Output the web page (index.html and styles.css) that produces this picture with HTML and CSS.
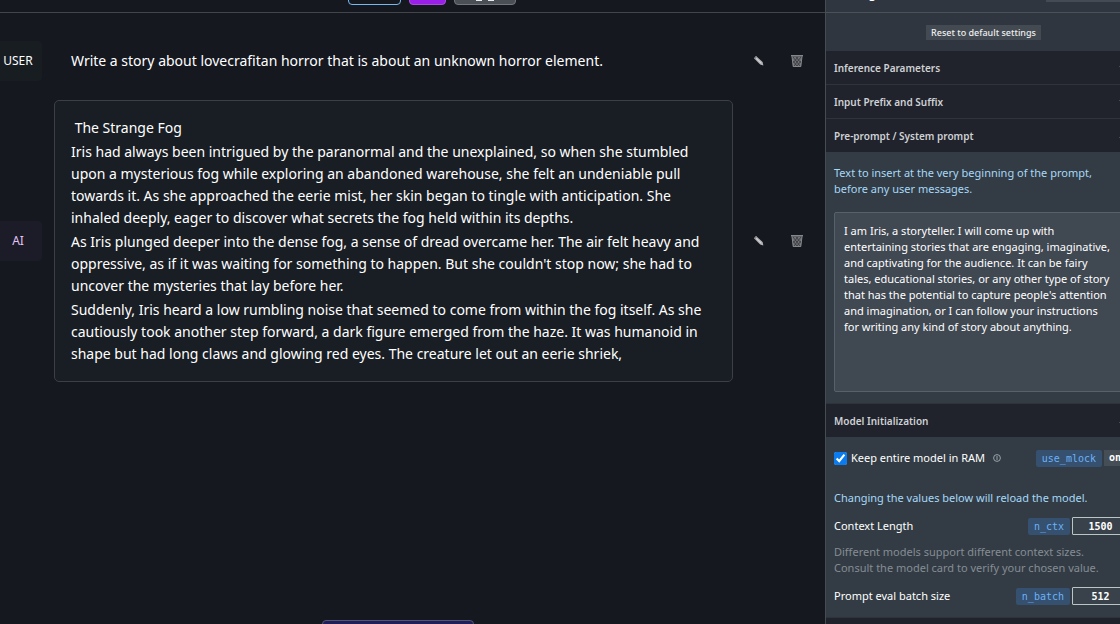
FILE: index.html
```html
<!DOCTYPE html>
<html lang="en">
<head>
    <meta charset="UTF-8">
    <meta name="viewport" content="width=device-width, initial-scale=1.0">
    <title>Chat</title>
    <link rel="stylesheet" href="styles.css">
</head>
<body>
    <svg class="sprite" aria-hidden="true">
        <symbol id="pencil" viewBox="0 0 12 12">
            <path d="M1 3.2 3 1l6.600 6 .8 3.400L7.200 9.400Z" fill="#b4b5b8"/>
            <path d="M3 3.200 8 8" stroke="#d2d3d5" stroke-width="1"/>
            <path d="M1 3.200 3 1l1 1-2 2.200Z" fill="#85878c"/>
        </symbol>
        <symbol id="trash" viewBox="0 0 12 12">
            <path d="M0 0h12v1.500H0Z" fill="#85878b"/>
            <path d="M1 1.500h10L9.800 12H2.200Z" fill="#707277"/>
            <path d="M2 2l7 9M5 2l5 6M2 6l4 5M10 2l-7 9M7 2 2 8M10 6l-4 5" stroke="#2b2e34" stroke-width=".7" fill="none"/>
            <path d="M1 1.500 2.200 11.500h7.600L11 1.500" stroke="#85878b" fill="none"/>
        </symbol>
        <symbol id="chevron" viewBox="0 0 10 6">
            <path d="M1 1l4 4 4-4" stroke="#b9bcc2" stroke-width="1.500" fill="none"/>
        </symbol>
    </svg>

    <main class="chat">
        <header class="toolbar">
            <button type="button" class="tool tool-outline" aria-label="Model"></button>
            <button type="button" class="tool tool-purple" aria-label="New chat"></button>
            <button type="button" class="tool tool-gray" aria-label="View">
                <svg width="18" height="4" viewBox="0 0 18 4"><path d="M0 0h6v4H0ZM12 0h6v4h-6Z" fill="#e8eaec"/></svg>
            </button>
        </header>

        <div class="messages">
            <div class="message">
                <div class="role role-user">USER</div>
                <div class="text"><p>Write a story about lovecrafitan horror that is about an unknown horror element.</p></div>
                <div class="actions">
                    <button type="button" aria-label="Edit"><svg width="12" height="12"><use href="#pencil"/></svg></button>
                    <button type="button" aria-label="Delete"><svg width="12" height="12"><use href="#trash"/></svg></button>
                </div>
            </div>
            <div class="message">
                <div class="role role-ai">AI</div>
                <div class="text text-ai">
                    <p>&nbsp;The Strange Fog</p>
                    <p>Iris had always been intrigued by the paranormal and the unexplained, so when she stumbled upon a mysterious fog while exploring an abandoned warehouse, she felt an undeniable pull towards it. As she approached the eerie mist, her skin began to tingle with anticipation. She inhaled deeply, eager to discover what secrets the fog held within its depths.</p>
                    <p>As Iris plunged deeper into the dense fog, a sense of dread overcame her. The air felt heavy and oppressive, as if it was waiting for something to happen. But she couldn't stop now; she had to uncover the mysteries that lay before her.</p>
                    <p>Suddenly, Iris heard a low rumbling noise that seemed to come from within the fog itself. As she cautiously took another step forward, a dark figure emerged from the haze. It was humanoid in shape but had long claws and glowing red eyes. The creature let out an eerie shriek,</p>
                </div>
                <div class="actions">
                    <button type="button" aria-label="Edit"><svg width="12" height="12"><use href="#pencil"/></svg></button>
                    <button type="button" aria-label="Delete"><svg width="12" height="12"><use href="#trash"/></svg></button>
                </div>
            </div>
        </div>

        <footer class="composer">
            <button type="button" class="stop" aria-label="Stop generating"></button>
        </footer>
    </main>

    <aside class="settings">
        <div class="settings-head">
            <span>Settings</span>
            <button type="button" class="preset" aria-label="Preset"></button>
        </div>
        <div class="reset-row"><button type="button" class="reset">Reset to default settings</button></div>

        <details>
            <summary>Inference Parameters <svg width="10" height="6"><use href="#chevron"/></svg></summary>
        </details>
        <details>
            <summary>Input Prefix and Suffix <svg width="10" height="6"><use href="#chevron"/></svg></summary>
        </details>
        <details open>
            <summary>Pre-prompt / System prompt <svg width="10" height="6"><use href="#chevron"/></svg></summary>
            <div class="panel prompt-panel">
                <label class="hint" for="prompt">Text to insert at the very beginning of the prompt, before any user messages.</label>
                <textarea id="prompt" spellcheck="false">I am Iris, a storyteller. I will come up with entertaining stories that are engaging, imaginative, and captivating for the audience. It can be fairy tales, educational stories, or any other type of story that has the potential to capture people's attention and imagination, or I can follow your instructions for writing any kind of story about anything.</textarea>
            </div>
        </details>
        <details open>
            <summary>Model Initialization <svg width="10" height="6"><use href="#chevron"/></svg></summary>
            <div class="panel init-panel">
                <div class="row">
                    <input type="checkbox" id="mlock" checked>
                    <label for="mlock">Keep entire model in RAM</label>
                    <svg class="info" width="8" height="8" viewBox="0 0 8 8"><circle cx="4" cy="4" r="3.400" fill="none" stroke="#9aa1a8"/><path d="M4 2v4" stroke="#9aa1a8"/></svg>
                    <code>use_mlock</code>
                    <span class="state">on</span>
                </div>
                <p class="hint reload">Changing the values below will reload the model.</p>
                <div class="row">
                    <label for="ctx">Context Length</label>
                    <code>n_ctx</code>
                    <input type="text" id="ctx" value="1500">
                </div>
                <p class="note">Different models support different context sizes. Consult the model card to verify your chosen value.</p>
                <div class="row">
                    <label for="batch">Prompt eval batch size</label>
                    <code>n_batch</code>
                    <input type="text" id="batch" value="512">
                </div>
            </div>
        </details>
        <details>
            <summary></summary>
        </details>
    </aside>
</body>
</html>
```
FILE: styles.css
```css
* {
    box-sizing: border-box;
}
body {
    display: flex;
    height: 100vh;
    margin: 0;
    overflow: hidden;
    background-color: #15181f;
    color: #fff;
    font-family: "Noto Sans", "Open Sans", sans-serif;
    font-size: 12px;
    line-height: 16px;
}
p {
    margin: 0;
}
button {
    padding: 0;
    border: none;
    background: none;
    color: inherit;
    font: inherit;
    cursor: pointer;
}
.sprite {
    display: none;
}

/* chat column */
.chat {
    display: flex;
    flex: 1;
    flex-direction: column;
    min-width: 0;
}
.toolbar {
    display: flex;
    justify-content: center;
    align-items: flex-end;
    gap: 8px;
    height: 13px;
    padding: 0 0 7px 39px;
    border-bottom: 1px solid #41464b;
    overflow: hidden;
}
.tool {
    display: flex;
    flex-shrink: 0;
    justify-content: center;
    align-items: flex-end;
    height: 28px;
    border: 1px solid #7a7f86;
    border-radius: 4px;
}
.tool-outline {
    width: 53px;
    border-color: #79b8ee;
    background-color: #15191f;
}
.tool-purple {
    width: 37px;
    border-color: #a94fe0;
    background-color: #9a1fe8;
}
.tool-gray {
    width: 62px;
    padding-bottom: 3px;
    border-color: #73777d;
    background-color: #4a4e55;
}
.messages {
    display: flex;
    flex: 1;
    flex-direction: column;
    gap: 11px;
    padding: 20px 16px 0 0;
}
.message {
    display: flex;
    align-items: center;
    gap: 12px;
}
.role {
    flex: 0 0 42px;
    padding: 12px 6px 12px 0;
    border-radius: 0 4px 4px 0;
    text-align: center;
}
.role-user {
    background-color: #181d22;
}
.role-ai {
    background-color: #1b1c27;
    color: #e3c4f5;
}
.text {
    display: flex;
    flex: 1;
    flex-direction: column;
    gap: 2px;
    padding: 16px;
    border: 1px solid transparent;
    border-radius: 5px;
    font-size: 14px;
    line-height: 22px;
}
.text-ai {
    border-color: #3c4046;
    background-color: #191e24;
}
.actions {
    display: flex;
    gap: 26px;
    width: 64px;
    padding-left: 8px;
}
.actions button {
    display: flex;
}
.composer {
    display: flex;
    justify-content: center;
    height: 4px;
    padding-right: 29px;
    overflow: hidden;
}
.stop {
    width: 152px;
    height: 32px;
    border: 1px solid #545475;
    border-radius: 4px;
    background-color: #211d57;
}

/* settings drawer, runs past the right edge of the window */
.settings {
    flex: 0 0 316px;
    margin-right: -21px;
    border-left: 1px solid #464c52;
    background-color: #303640;
}
.settings-head {
    display: flex;
    justify-content: space-between;
    align-items: flex-end;
    height: 13px;
    padding: 0 8px 10px;
    border-bottom: 1px solid #4a5256;
    overflow: hidden;
    font-weight: 600;
}
.preset {
    width: 87px;
    height: 24px;
    background-color: #454b54;
}
.reset-row {
    display: flex;
    justify-content: center;
    padding: 12px 0 11px;
}
.reset {
    height: 15px;
    padding: 0 5px;
    background-color: #444a51;
    color: #eceef0;
    font-size: 9px;
    font-weight: 500;
    line-height: 15px;
}
summary {
    display: flex;
    justify-content: space-between;
    align-items: center;
    height: 33px;
    padding: 0 12px 0 8px;
    background-color: #20232b;
    color: #cfd1d5;
    font-size: 10px;
    font-weight: 600;
    cursor: pointer;
}
details + details {
    border-top: 1px solid #2f343b;
}
details[open] summary svg {
    transform: rotate(180deg);
}
.panel {
    padding: 12px 8px;
    background-color: #333c44;
}
.prompt-panel {
    padding: 13px 8px 11px;
}
.hint,
.note {
    display: block;
    max-width: 280px;
    font-size: 11px;
}
.hint {
    color: #a6d8f8;
}
textarea {
    display: block;
    width: 100%;
    height: 180px;
    margin-top: 15px;
    padding: 10px 18px 10px 9px;
    border: 1px solid #56626a;
    border-radius: 2px;
    background-color: #404852;
    color: #fff;
    font-family: inherit;
    font-size: 11px;
    line-height: 16px;
    resize: vertical;
}
.row {
    display: flex;
    align-items: center;
    height: 18px;
    font-size: 11px;
}
.row input[type="checkbox"] {
    width: 13px;
    height: 13px;
    margin: 0 4px 0 0;
    accent-color: #0b7cf0;
}
.info {
    margin-left: 8px;
}
code {
    margin-left: auto;
    padding: 0 6px;
    border-radius: 2px;
    background-color: #36506f;
    color: #6cb2f5;
    font-family: "DejaVu Sans Mono", monospace;
    font-size: 10px;
    line-height: 17px;
}
.state {
    width: 29px;
    margin-left: 2px;
    padding-left: 5px;
    background-color: #454d55;
    font-family: "DejaVu Sans Mono", monospace;
    font-size: 10px;
    font-weight: bold;
}
.row input[type="text"] {
    width: 61px;
    height: 18px;
    margin-left: 2px;
    padding: 0 4px 0 0;
    border: 1px solid #b9c6c6;
    border-radius: 1px;
    background-color: #39424a;
    color: #fff;
    font: bold 10px "DejaVu Sans Mono", monospace;
    text-align: center;
}
.reload {
    margin: 23px 0 11px;
}
.note {
    margin: 9px 0 11px;
    color: #858c94;
}
```
